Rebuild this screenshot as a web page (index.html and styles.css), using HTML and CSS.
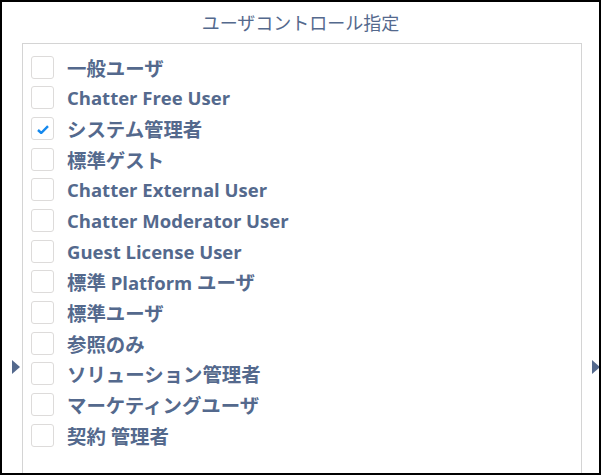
FILE: index.html
```html
<!DOCTYPE html>
<html lang="ja">
<head>
    <meta charset="UTF-8">
    <title>ユーザコントロール指定</title>
    <link rel="stylesheet" href="styles.css">
</head>
<body>
<div class="frame">
    <div class="title">ユーザコントロール指定</div>
    <div class="picker">
        <div class="side side-left"><span class="arrow"></span></div>
        <div class="box">
            <ul class="list">
                <li><span class="check"></span><span class="label"><span class="ja">一般ユーザ</span></span></li>
                <li><span class="check"></span><span class="label">Chatter Free User</span></li>
                <li>
                    <span class="check checked">
                        <svg width="12" height="9" viewBox="0 0 12 9"><path d="M1 5 L4.2 8 L11 1.2" fill="none" stroke="#1589ee" stroke-width="2.4"/></svg>
                    </span>
                    <span class="label"><span class="ja">システム管理者</span></span>
                </li>
                <li><span class="check"></span><span class="label"><span class="ja">標準ゲスト</span></span></li>
                <li><span class="check"></span><span class="label">Chatter External User</span></li>
                <li><span class="check"></span><span class="label">Chatter Moderator User</span></li>
                <li><span class="check"></span><span class="label">Guest License User</span></li>
                <li><span class="check"></span><span class="label"><span class="ja">標準</span> Platform <span class="ja">ユーザ</span></span></li>
                <li><span class="check"></span><span class="label"><span class="ja">標準ユーザ</span></span></li>
                <li><span class="check"></span><span class="label"><span class="ja">参照のみ</span></span></li>
                <li><span class="check"></span><span class="label"><span class="ja">ソリューション管理者</span></span></li>
                <li><span class="check"></span><span class="label"><span class="ja">マーケティングユーザ</span></span></li>
                <li><span class="check"></span><span class="label"><span class="ja">契約</span> <span class="ja">管理者</span></span></li>
            </ul>
        </div>
        <div class="side side-right"><span class="arrow"></span></div>
    </div>
</div>
</body>
</html>
```

FILE: styles.css
```css
body {
    margin: 0;
    padding: 0;
    background: white;
    font-family: "Open Sans", "Noto Sans CJK JP", sans-serif;
}
.frame {
    width: 601px;
    height: 475px;
    box-sizing: border-box;
    border: 2px solid #000;
    overflow: hidden;
}
.title {
    height: 41px;
    line-height: 41px;
    text-align: center;
    font-family: "Noto Sans CJK JP", sans-serif;
    font-size: 18px;
    color: #54698d;
}
.picker {
    display: flex;
    align-items: center;
}
.side {
    width: 20px;
    flex: none;
}
.side-right {
    width: 17px;
}
.arrow {
    display: block;
    width: 0;
    height: 0;
    border-top: 7px solid transparent;
    border-bottom: 7px solid transparent;
    border-left: 8px solid #54698d;
}
.side-left .arrow { margin-left: 10px; }
.side-right .arrow { margin-left: 10px; }
.box {
    width: 560px;
    height: 648px;
    box-sizing: border-box;
    border: 1px solid #d4d4d4;
    padding: 8px 8px;
}
.list {
    list-style: none;
    margin: 0;
    padding: 0;
}
.list li {
    display: flex;
    align-items: center;
    height: 30.67px;
}
.check {
    width: 23px;
    height: 23px;
    box-sizing: border-box;
    border: 1px solid #dddbda;
    border-radius: 3px;
    display: flex;
    align-items: center;
    justify-content: center;
    flex: none;
}
.checked svg {
    margin-top: 2px;
}
.label {
    margin-left: 13px;
    font-size: 18.5px;
    font-weight: 700;
    color: #54698d;
    white-space: nowrap;
}
.ja {
    font-size: 1.05em;
}
```
